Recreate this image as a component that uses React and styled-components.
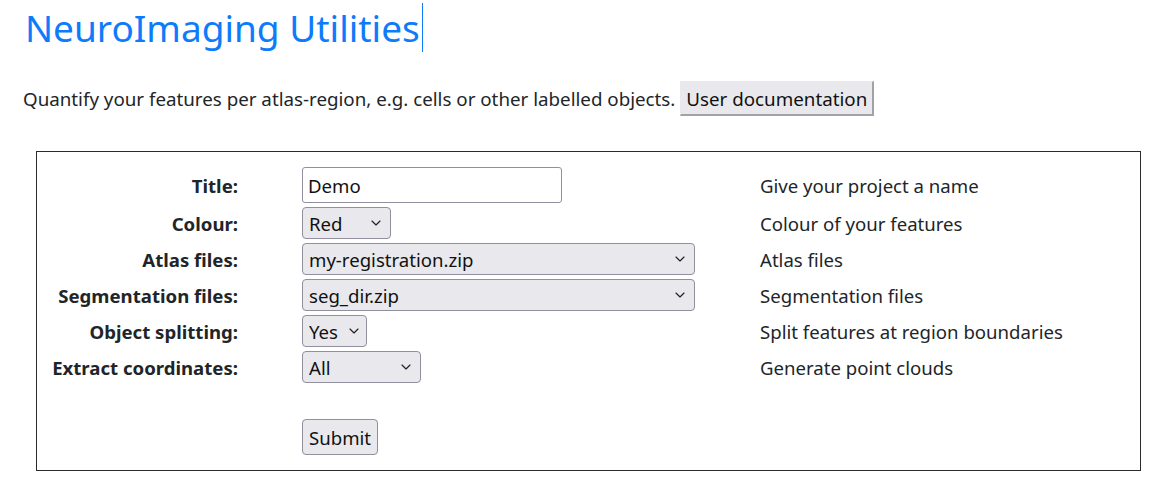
import React from 'react';
import styled, { createGlobalStyle } from 'styled-components';
import { ChevronDown } from 'lucide-react';

const GlobalStyle = createGlobalStyle`
  body {
    margin: 0;
    background: #fff;
    font-family: 'Noto Sans', 'Open Sans', sans-serif;
    color: #212529;
  }
`;

const Page = styled.div`
  padding: 0 15px 0 23px;
`;

const Heading = styled.h1`
  margin: 0;
  padding: 3px 0 0 2px;
  height: 52px;
  display: flex;
  align-items: flex-start;
  font-size: 37px;
  font-weight: 400;
  line-height: 49px;
  color: #0d7bfa;
`;

const Caret = styled.span`
  display: inline-block;
  width: 1px;
  height: 49px;
  margin-left: 2px;
  background: #0d7bfa;
`;

const Intro = styled.p`
  margin: 26px 0 0;
  display: flex;
  align-items: center;
  gap: 5px;
  font-size: 18.75px;
  line-height: 34px;
`;

const DocButton = styled.button`
  height: 35px;
  padding: 0 5px;
  font: inherit;
  color: #111;
  background: #e9e9ed;
  border: 1px solid #e9e9ed;
  border-right: 2px solid #a2a2a6;
  border-bottom: 2px solid #a2a2a6;
  border-radius: 0;
`;

const Box = styled.form`
  margin: 35px 0 0 13px;
  border: 1px solid #2b2b2b;
  padding: 15px 0 15px;
`;

const Grid = styled.div`
  display: grid;
  grid-template-columns: 201px 394px 1fr;
  column-gap: 64px;
  row-gap: 4px;
  align-items: center;
  font-size: 18.6px;
`;

const Label = styled.label`
  text-align: right;
  font-weight: 700;
  line-height: 30px;
  padding-top: 2px;
`;

const Cell = styled.div`
  display: flex;
  margin-top: ${p => (p.$spaced ? '32px' : '0')};
`;

const Hint = styled.span`
  color: #212529;
  line-height: 30px;
  padding-top: 2px;
`;

const TextInput = styled.input`
  box-sizing: border-box;
  width: 260px;
  height: 36px;
  padding: 0 5px;
  font: inherit;
  color: #111;
  border: 1px solid #8f8f9d;
  border-radius: 3px;
  background: #fff;
`;

const SelectWrap = styled.span`
  position: relative;
  display: inline-flex;
  width: ${p => p.$width}px;

  svg {
    position: absolute;
    right: ${p => p.$chevron || 7}px;
    top: 50%;
    transform: translateY(-50%);
    pointer-events: none;
    color: #222;
  }
`;

const Select = styled.select`
  appearance: none;
  box-sizing: border-box;
  width: 100%;
  height: 32px;
  padding: 0 24px 0 6px;
  font: inherit;
  color: #111;
  background: #e9e9ed;
  border: 1px solid #8f8f9d;
  border-radius: 4px;
`;

const SubmitButton = styled.button`
  box-sizing: border-box;
  height: 36px;
  padding: 0 6px;
  font: inherit;
  color: #111;
  background: #e9e9ed;
  border: 1px solid #8f8f9d;
  border-radius: 4px;
`;

const rows = [
  { label: 'Colour:', hint: 'Colour of your features', value: 'Red', width: 89 },
  { label: 'Atlas files:', hint: 'Atlas files', value: 'my-registration.zip', width: 393 },
  { label: 'Segmentation files:', hint: 'Segmentation files', value: 'seg_dir.zip', width: 393 },
  { label: 'Object splitting:', hint: 'Split features at region boundaries', value: 'Yes', width: 65, chevron: 5 },
  { label: 'Extract coordinates:', hint: 'Generate point clouds', value: 'All', width: 119 },
];

export default function App() {
  return (
    <Page>
      <GlobalStyle />
      <Heading>
        NeuroImaging Utilities
        <Caret />
      </Heading>
      <Intro>
        Quantify your features per atlas-region, e.g. cells or other labelled objects.
        <DocButton type="button">User documentation</DocButton>
      </Intro>
      <Box onSubmit={e => e.preventDefault()}>
        <Grid>
          <Label htmlFor="title">Title:</Label>
          <Cell>
            <TextInput id="title" defaultValue="Demo" />
          </Cell>
          <Hint>Give your project a name</Hint>

          {rows.map(r => (
            <React.Fragment key={r.label}>
              <Label>{r.label}</Label>
              <Cell>
                <SelectWrap $width={r.width} $chevron={r.chevron}>
                  <Select defaultValue={r.value}>
                    <option>{r.value}</option>
                  </Select>
                  <ChevronDown size={16} strokeWidth={1.75} />
                </SelectWrap>
              </Cell>
              <Hint>{r.hint}</Hint>
            </React.Fragment>
          ))}

          <span />
          <Cell $spaced>
            <SubmitButton type="submit">Submit</SubmitButton>
          </Cell>
          <span />
        </Grid>
      </Box>
    </Page>
  );
}
